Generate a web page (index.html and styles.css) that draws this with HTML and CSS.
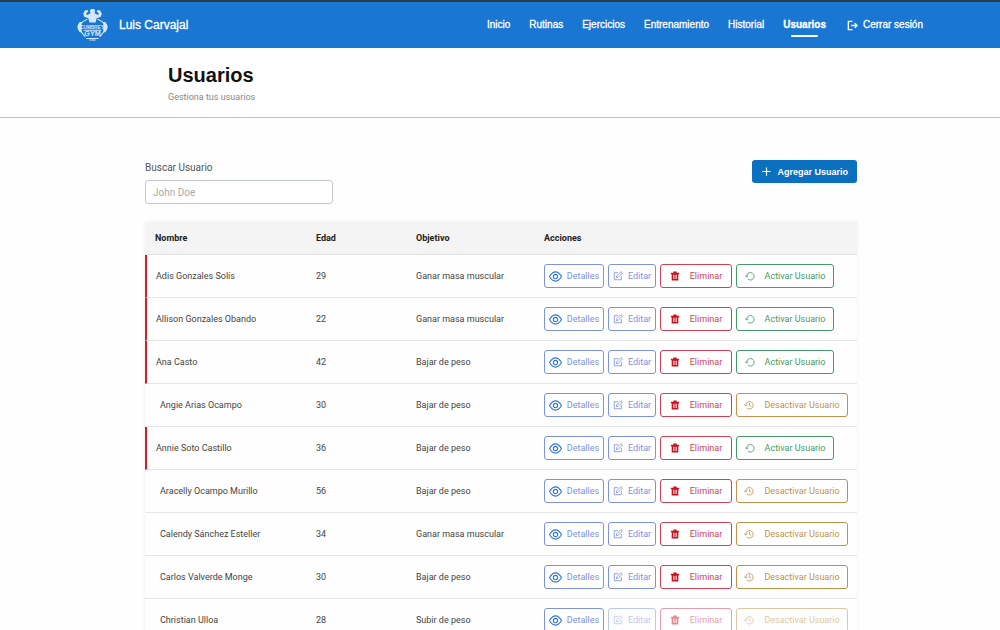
FILE: index.html
```html
<!DOCTYPE html>
<html lang="es">
<head>
    <meta charset="UTF-8">
    <meta name="viewport" content="width=device-width, initial-scale=1.0">
    <title>Usuarios</title>
    <link rel="stylesheet" href="styles.css">
</head>
<body>
    <svg class="sprite" aria-hidden="true">
        <symbol id="icon-eye" viewBox="0 0 24 24">
            <path d="M1 12C4.500 6 8 3.500 12 3.500S19.500 6 23 12C19.500 18 16 20.500 12 20.500S4.500 18 1 12Z"/>
            <circle cx="12" cy="12" r="4"/>
        </symbol>
        <symbol id="icon-edit" viewBox="0 0 24 24">
            <path d="M12 4H3v17h17v-9"/>
            <path d="M8 16l1-4.500L19 1.500 22.500 5l-10 10Z"/>
        </symbol>
        <symbol id="icon-trash" viewBox="0 0 24 24">
            <path fill="currentColor" stroke="none" fill-rule="evenodd" d="M8 1h8v3h6v3.500h-2V23H4V7.500H2V4h6Z M8 9v10h2.500V9Z M13.500 9v10H16V9Z"/>
        </symbol>
        <symbol id="icon-restore" viewBox="0 0 24 24">
            <path d="M4 14A9 9 0 1 1 7 19.500"/>
            <path d="M0 10.500l4 4 4-4"/>
        </symbol>
        <symbol id="icon-history" viewBox="0 0 24 24">
            <path d="M4 14A9 9 0 1 1 7 19.500"/>
            <path d="M0 10.500l4 4 4-4M13 7v6l4 2.500"/>
        </symbol>
    </svg>

    <header class="navbar">
        <a class="brand" href="#">
            <svg class="logo" viewBox="0 0 60 62" aria-hidden="true">
                <path class="logo-fill" d="M14 15l-2-6 3-6 5-1 2 3-4 3 1 4 5-3 2-1-1-5 2-3h6l2 3-1 5 2 1 5 3 1-4-4-3 2-3 5 1 3 6-2 6-8 3-2 8H24l-2-8Z"/>
                <path class="logo-line" d="M20 20l-8 4M40 20l8 4M12 24l-5 5M48 24l5 5M7 43l9 11M53 43l-9 11"/>
                <path class="logo-fill" d="M5 25h4v20H5l-4-7v-6ZM55 25h-4v20h4l4-7v-6Z"/>
                <text class="logo-text" x="30" y="38" font-size="9" text-anchor="middle">CUMBRE'S</text>
                <text class="logo-text" x="30" y="53" font-size="14" text-anchor="middle">GYM</text>
                <path class="logo-line" d="M13 41h34M18 57h24M24 60h12"/>
            </svg>
            <span>Luis Carvajal</span>
        </a>
        <nav class="menu">
            <a href="#">Inicio</a>
            <a href="#">Rutinas</a>
            <a href="#">Ejercicios</a>
            <a href="#">Entrenamiento</a>
            <a href="#">Historial</a>
            <a class="active" href="#">Usuarios</a>
            <a class="logout" href="#">
                <svg viewBox="0 0 24 24" aria-hidden="true"><path d="M12 3H3v18h9M9 12h13M17 7l5 5-5 5"/></svg>
                Cerrar sesión
            </a>
        </nav>
    </header>

    <section class="page-title">
        <h1>Usuarios</h1>
        <p>Gestiona tus usuarios</p>
    </section>

    <main class="content">
        <div class="toolbar">
            <div class="search">
                <label for="buscar">Buscar Usuario</label>
                <input type="text" id="buscar" placeholder="John Doe">
            </div>
            <button class="btn-add" type="button">
                <svg viewBox="0 0 24 24" aria-hidden="true"><path d="M12 1v22M1 12h22"/></svg>
                Agregar Usuario
            </button>
        </div>

        <table class="users">
            <thead>
                <tr>
                    <th class="col-name">Nombre</th>
                    <th class="col-age">Edad</th>
                    <th class="col-goal">Objetivo</th>
                    <th>Acciones</th>
                </tr>
            </thead>
            <tbody id="userRows"></tbody>
        </table>
    </main>

    <script src="app.js"></script>
</body>
</html>
```
FILE: styles.css
```css
* {
    box-sizing: border-box;
}

body {
    margin: 0;
    background: #fefefe;
    font-family: Roboto, "Liberation Sans", sans-serif;
    color: #444;
    overflow: hidden;
}

.sprite {
    display: none;
}

svg {
    fill: none;
    stroke: currentColor;
    stroke-width: 2;
    flex: none;
}

.navbar {
    display: flex;
    align-items: center;
    justify-content: space-between;
    height: 48px;
    padding: 0 77px;
    background: #1976d2;
    border-top: 2px solid #263f45;
    font-family: "Liberation Sans", Arial, sans-serif;
}

.navbar a {
    color: #fff;
    text-decoration: none;
}

.brand {
    display: flex;
    align-items: center;
    gap: 11px;
    font-size: 12px;
    -webkit-text-stroke: 0.3px #fff;
}

.navbar .logo {
    width: 31px;
    height: 32px;
    color: #d5e8fb;
    -webkit-text-stroke: 0;
}

.logo-fill {
    fill: currentColor;
    stroke: none;
}

.logo-text {
    fill: #d5e8fb;
    stroke: none;
    font-weight: bold;
}

.menu {
    display: flex;
    align-items: center;
    gap: 19px;
    font-size: 10px;
    line-height: 12px;
    -webkit-text-stroke: 0.3px #fff;
}

.menu .active {
    position: relative;
    font-weight: bold;
}

.menu .active::after {
    content: "";
    position: absolute;
    left: 8px;
    right: 8px;
    bottom: -6px;
    height: 2px;
    border-radius: 1px;
    background: #fff;
}

.logout {
    display: flex;
    align-items: center;
    gap: 5px;
    margin-left: 2px;
}

.logout svg {
    width: 11px;
    height: 11px;
    stroke-width: 3;
}

.page-title {
    height: 70px;
    padding: 15px 168px 0;
    background: #fff;
    border-bottom: 1px solid #bcc5cb;
}

.page-title h1 {
    margin: 0;
    font-family: "Liberation Sans", Arial, sans-serif;
    font-size: 20px;
    line-height: 24px;
    color: #111;
}

.page-title p {
    margin: 4px 0 0;
    font-size: 9px;
    line-height: 12px;
    color: #888;
}

.content {
    padding: 42px 143px 0 145px;
}

.toolbar {
    display: flex;
    justify-content: space-between;
    align-items: flex-start;
    margin-bottom: 18px;
}

.search label {
    display: block;
    margin-bottom: 4px;
    font-size: 10px;
    line-height: 16px;
    color: #555;
}

.search input {
    display: block;
    width: 188px;
    height: 24px;
    padding: 0 7px;
    border: 1px solid #c4c8cc;
    border-radius: 3px;
    background: #fff;
    font-family: inherit;
    font-size: 10px;
}

.search input::placeholder {
    color: #aaa;
}

button {
    display: flex;
    align-items: center;
    font-family: inherit;
    cursor: pointer;
}

.btn-add {
    gap: 6px;
    height: 23px;
    padding: 0 9px 0 10px;
    border: none;
    border-radius: 3px;
    background: #0b70c0;
    color: #fff;
    font-family: "Liberation Sans", Arial, sans-serif;
    font-size: 9px;
    font-weight: bold;
}

.btn-add svg {
    width: 9px;
    height: 9px;
    stroke-width: 3;
}

.users {
    width: 100%;
    table-layout: fixed;
    border-collapse: separate;
    border-spacing: 0;
    font-size: 9px;
    box-shadow: 0 0 3px rgba(0, 0, 0, 0.08);
}

.users th {
    height: 33px;
    padding: 0 10px;
    background: #f4f4f4;
    border-bottom: 1px solid #e2e2e2;
    color: #222;
    text-align: left;
}

.users td {
    height: 43px;
    padding: 0 5px 0 10px;
    border-bottom: 1px solid #e6e6e6;
}

.col-name {
    width: 161px;
}

.col-age {
    width: 100px;
}

.col-goal {
    width: 128px;
}

.users td:first-child {
    padding-left: 15px;
}

.users .inactive td:first-child {
    padding-left: 9px;
    border-left: 2px solid #cf2029;
}

.actions {
    display: flex;
    gap: 4px;
}

.actions button {
    justify-content: center;
    gap: 5px;
    height: 24px;
    padding: 0;
    border: 1px solid currentColor;
    border-radius: 3px;
    background: #fff;
    font-size: 9px;
    white-space: nowrap;
}

.actions svg {
    width: 10px;
    height: 10px;
}

.actions .details {
    width: 60px;
    color: #7d92e0;
}

.actions .details svg {
    width: 13px;
    height: 13px;
    color: #2d74dc;
}

.actions .edit {
    width: 48px;
    color: #7d92e0;
}

.actions .delete {
    gap: 10px;
    width: 72px;
    color: #cf4255;
}

.actions .delete svg {
    color: #c71420;
}

.actions .activate {
    gap: 10px;
    width: 98px;
    color: #46996a;
}

.actions .deactivate {
    gap: 10px;
    width: 112px;
    color: #c3924a;
}

.actions .pending {
    opacity: 0.5;
}
```
FILE: app.js
```js
const users = [
    { name: 'Adis Gonzales Solís', age: 29, goal: 'Ganar masa muscular', active: false },
    { name: 'Allison Gonzales Obando', age: 22, goal: 'Ganar masa muscular', active: false },
    { name: 'Ana Casto', age: 42, goal: 'Bajar de peso', active: false },
    { name: 'Angie Arias Ocampo', age: 30, goal: 'Bajar de peso', active: true },
    { name: 'Annie Soto Castillo', age: 36, goal: 'Bajar de peso', active: false },
    { name: 'Aracelly Ocampo Murillo', age: 56, goal: 'Bajar de peso', active: true },
    { name: 'Calendy Sánchez Esteller', age: 34, goal: 'Ganar masa muscular', active: true },
    { name: 'Carlos Valverde Monge', age: 30, goal: 'Bajar de peso', active: true },
    { name: 'Christian Ulloa', age: 28, goal: 'Subir de peso', active: true, pending: true }
];

function button(type, icon, text, pending) {
    return `<button type="button" class="${type}${pending ? ' pending' : ''}">
        <svg aria-hidden="true"><use href="#icon-${icon}"></use></svg>${text}</button>`;
}

document.getElementById('userRows').innerHTML = users.map(user => `
    <tr class="${user.active ? '' : 'inactive'}">
        <td>${user.name}</td>
        <td>${user.age}</td>
        <td>${user.goal}</td>
        <td>
            <div class="actions">
                ${button('details', 'eye', 'Detalles')}
                ${button('edit', 'edit', 'Editar', user.pending)}
                ${button('delete', 'trash', 'Eliminar', user.pending)}
                ${user.active
                    ? button('deactivate', 'history', 'Desactivar Usuario', user.pending)
                    : button('activate', 'restore', 'Activar Usuario', user.pending)}
            </div>
        </td>
    </tr>`).join('');
```
